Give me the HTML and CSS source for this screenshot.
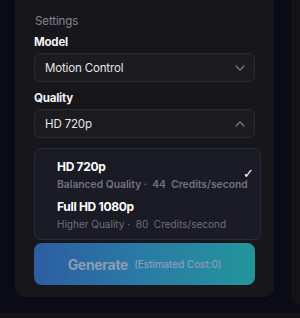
FILE: index.html
```html
<!DOCTYPE html>
<html>
<head>
<meta charset="utf-8">
<link rel="stylesheet" href="styles.css">
</head>
<body>
<div class="page">
  <div class="row">
    <div class="card">
      <div class="section-title">Settings</div>
      <div class="field">
        <div class="label">Model</div>
        <div class="select">
          <span class="select-value">Motion Control</span>
          <svg class="chev" width="10" height="6" viewBox="0 0 10 6"><path d="M1 1 L5 5 L9 1" fill="none" stroke="#7d7d86" stroke-width="1.2" stroke-linecap="round" stroke-linejoin="round"/></svg>
        </div>
      </div>
      <div class="field">
        <div class="label">Quality</div>
        <div class="select">
          <span class="select-value">HD 720p</span>
          <svg class="chev" width="10" height="6" viewBox="0 0 10 6"><path d="M1 5 L5 1 L9 5" fill="none" stroke="#7d7d86" stroke-width="1.2" stroke-linecap="round" stroke-linejoin="round"/></svg>
        </div>
      </div>
      <div class="menu">
        <div class="option selected">
          <div class="opt-title">HD 720p</div>
          <div class="opt-sub">Balanced Quality ·&nbsp; 44 &nbsp;Credits/second</div>
          <span class="check">✓</span>
        </div>
        <div class="option">
          <div class="opt-title">Full HD 1080p</div>
          <div class="opt-sub">Higher Quality ·&nbsp; 80 &nbsp;Credits/second</div>
        </div>
      </div>
      <button class="generate"><span class="gen-main">Generate</span><span class="gen-cost">(Estimated Cost:0)</span></button>
    </div>
    <div class="side"></div>
  </div>
  <div class="bottom-strip"></div>
</div>
</body>
</html>
```
FILE: styles.css
```css
html, body {
  margin: 0;
  padding: 0;
}
body {
  background: #0b0b15;
  font-family: Inter, "Liberation Sans", sans-serif;
  width: 300px;
  height: 318px;
  overflow: hidden;
}
.page {
  display: flex;
  flex-direction: column;
  height: 318px;
}
.row {
  display: flex;
  gap: 17px;
  padding-left: 15px;
  height: 313px;
}
.card {
  width: 259px;
  height: 297px;
  box-sizing: border-box;
  background: #17171b;
  border-radius: 0 0 10px 10px;
  padding: 12px 19px 12px 19px;
  display: flex;
  flex-direction: column;
}
.side {
  flex: 1;
  height: 305px;
  background: #131317;
  border-radius: 0 0 0 10px;
}
.bottom-strip {
  height: 5px;
  background: #141416;
}
.section-title {
  color: #85858d;
  font-size: 11.5px;
  line-height: 18px;
  margin-left: 1px;
  letter-spacing: -0.1px;
}
.field {
  display: flex;
  flex-direction: column;
  gap: 3px;
  margin-top: 4px;
}
.field + .field {
  margin-top: 8px;
}
.label {
  color: #f2f2f4;
  font-weight: 700;
  font-size: 11.5px;
  line-height: 16px;
  letter-spacing: -0.2px;
}
.select {
  height: 29px;
  box-sizing: border-box;
  border: 1px solid #2c2c32;
  background: #1b1b20;
  border-radius: 6px;
  display: flex;
  align-items: center;
  justify-content: space-between;
  padding: 0 9px 0 10px;
}
.select-value {
  color: #e6e6ea;
  font-size: 11.5px;
  letter-spacing: -0.15px;
}
.chev {
  display: block;
}
.menu {
  margin-top: 10px;
  margin-right: -6px;
  height: 92px;
  box-sizing: border-box;
  border: 1px solid #2a2a36;
  background: #1b1b25;
  border-radius: 6px;
  padding: 9px 12px 0 22px;
  display: flex;
  flex-direction: column;
  gap: 6px;
}
.option {
  position: relative;
}
.opt-title {
  color: #ffffff;
  font-weight: 700;
  font-size: 12px;
  line-height: 17px;
  letter-spacing: -0.3px;
}
.opt-sub {
  color: #6f6f7b;
  font-size: 10px;
  line-height: 16px;
  margin-top: 1px;
  white-space: nowrap;
}
.selected .opt-sub {
  font-weight: 600;
  font-size: 10.3px;
  color: #72727e;
}
.check {
  position: absolute;
  right: -6px;
  top: 8px;
  color: #ffffff;
  font-size: 13px;
  font-weight: 700;
  font-family: "DejaVu Sans", sans-serif;
}
.generate {
  margin-top: 3px;
  height: 42px;
  border: none;
  border-radius: 8px;
  background: linear-gradient(90deg, #2d5ea2 0%, #2a7ba6 50%, #22969a 100%);
  display: flex;
  align-items: center;
  justify-content: center;
  gap: 6px;
  padding: 0;
  font-family: inherit;
}
.gen-main {
  color: #8d9db4;
  font-weight: 700;
  font-size: 14px;
  letter-spacing: -0.3px;
}
.gen-cost {
  color: #8d9db4;
  font-size: 10px;
  font-weight: 500;
  letter-spacing: -0.1px;
}
```
